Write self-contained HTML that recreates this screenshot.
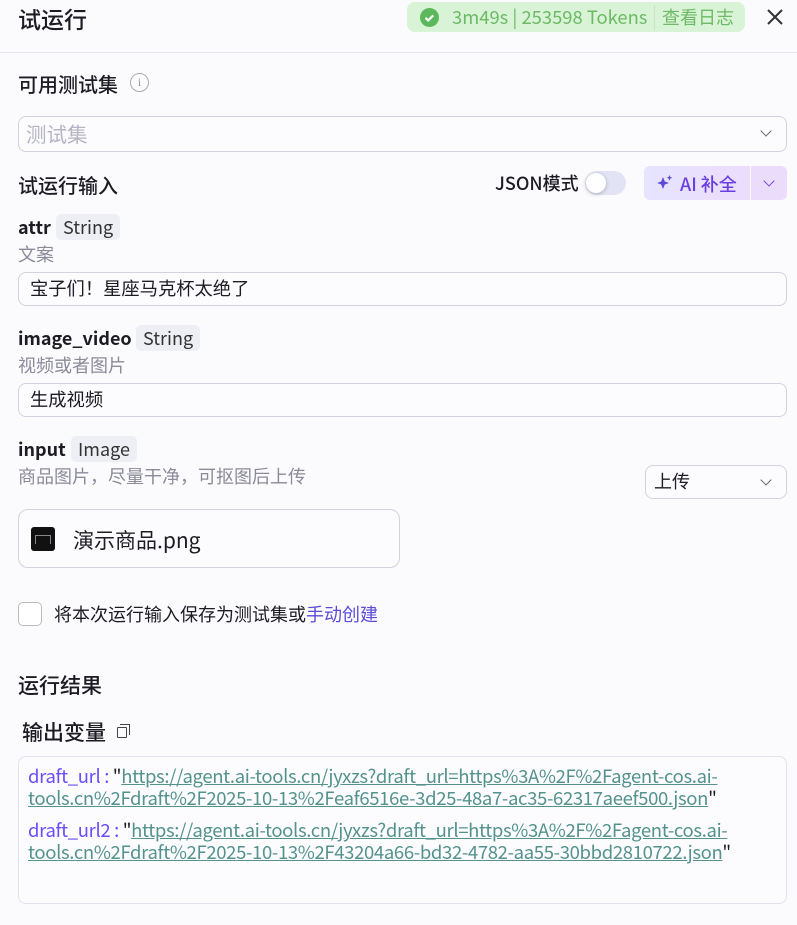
<!DOCTYPE html>
<html><head><meta charset="utf-8"><style>
*{box-sizing:border-box;margin:0;padding:0}
body{width:797px;height:925px;background:#fbfbfe;font-family:"Noto Sans CJK SC","Liberation Sans",sans-serif;color:#1d1c23;position:relative;overflow:hidden}
.a{position:absolute;white-space:nowrap}
.lbl{font-size:20px;font-weight:500;line-height:26px}
.nm{font-size:18px;font-weight:700;line-height:26px}
.grey{color:#8b8b99;font-size:18px;line-height:22px}
.box{position:absolute;border:1px solid #d2d2e0;border-radius:8px;background:#fcfcff}
.tag{position:absolute;background:#eeeff5;border-radius:5px;font-size:18px;line-height:26px;padding:0 7px;color:#333}
.chev{position:absolute;width:8px;height:8px;border-right:1.5px solid #666;border-bottom:1.5px solid #666;transform:rotate(45deg)}
.res{font-size:18.5px;line-height:22px;letter-spacing:-0.35px}
.k{color:#6b4dff}.u{color:#54928d;text-decoration:underline}
</style></head><body>
<div class="a" style="left:18px;top:3px;font-size:23px;font-weight:500;line-height:30px">试运行</div>
<div class="a" style="left:407px;top:2px;width:338px;height:30px;background:#d9f3d6;border-radius:8px"></div>
<div class="a" style="left:420px;top:8px;width:19px;height:19px;border-radius:50%;background:#5cb85c"></div>
<svg class="a" style="left:420px;top:8px" width="19" height="19"><path d="M5.5 9.8l2.7 2.6 5-5" stroke="#fff" stroke-width="2.2" fill="none"/></svg>
<div class="a" style="left:452px;top:4px;font-size:18.4px;line-height:26px;color:#6dba66">3m49s | 253598 Tokens</div>
<div class="a" style="left:654px;top:5px;width:1px;height:26px;background:#c6e6c2"></div>
<div class="a" style="left:662px;top:4px;font-size:18px;line-height:26px;color:#6dba66">查看日志</div>
<svg class="a" style="left:766px;top:8px" width="18" height="18"><path d="M2 2L16 16M16 2L2 16" stroke="#333" stroke-width="2"/></svg>
<div class="a" style="left:0;top:52px;width:797px;height:1px;background:#e6e6ef"></div>

<div class="a lbl" style="left:18px;top:71px">可用测试集</div>
<div class="a" style="left:130px;top:73px;width:19px;height:19px;border:1.5px solid #aaa;border-radius:50%;font-size:12px;line-height:16px;text-align:center;color:#999;font-family:'Liberation Serif',serif">i</div>
<div class="box" style="left:18px;top:116px;width:769px;height:36px"></div>
<div class="a" style="left:26px;top:120px;font-size:20.5px;line-height:27px;color:#b5b5c2">测试集</div>
<div class="chev" style="left:762px;top:127px"></div>

<div class="a lbl" style="left:18px;top:172px">试运行输入</div>
<div class="a" style="left:495px;top:171px;font-size:18px;line-height:25px;font-weight:500">JSON模式</div>
<div class="a" style="left:585px;top:171px;width:41px;height:24px;border-radius:12px;background:#e2e4f5"></div>
<div class="a" style="left:586px;top:173px;width:20px;height:20px;border-radius:50%;background:#fff;box-shadow:0 1px 4px rgba(0,0,0,.25)"></div>
<div class="a" style="left:644px;top:166px;width:106px;height:34px;border-radius:6px 0 0 6px;background:linear-gradient(90deg,#e6e4ff,#ecdcfb)"></div>
<div class="a" style="left:751px;top:166px;width:36px;height:34px;border-radius:0 6px 6px 0;background:#ecdcfb"></div>
<svg class="a" style="left:656px;top:174px" width="18" height="18"><path d="M7 3l1.8 4.5L13 9l-4.2 1.5L7 15l-1.8-4.5L1 9l4.2-1.5z" fill="#5b4ad8"/><path d="M13.5 1l.8 2 2 .8-2 .8-.8 2-.8-2-2-.8 2-.8z" fill="#5b4ad8"/></svg>
<div class="a" style="left:680px;top:171px;font-size:18px;line-height:26px;font-weight:500;color:#6a3fe0">AI 补全</div>
<div class="chev" style="left:765px;top:177px;border-color:#7b4bd8"></div>

<div class="a nm" style="left:18px;top:214px">attr</div>
<div class="tag" style="left:56px;top:214px">String</div>
<div class="a grey" style="left:18px;top:243px">文案</div>
<div class="box" style="left:18px;top:272px;width:769px;height:34px"></div>
<div class="a" style="left:30px;top:276px;font-size:18.3px;line-height:25px">宝子们！星座马克杯太绝了</div>

<div class="a nm" style="left:18px;top:325px">image_video</div>
<div class="tag" style="left:136px;top:325px">String</div>
<div class="a grey" style="left:18px;top:354px">视频或者图片</div>
<div class="box" style="left:18px;top:383px;width:769px;height:34px"></div>
<div class="a" style="left:30px;top:387px;font-size:18.3px;line-height:25px">生成视频</div>

<div class="a nm" style="left:18px;top:436px">input</div>
<div class="tag" style="left:71px;top:436px">Image</div>
<div class="a grey" style="left:18px;top:465px">商品图片，尽量干净，可抠图后上传</div>
<div class="box" style="left:645px;top:465px;width:142px;height:34px"></div>
<div class="a" style="left:654px;top:469px;font-size:18px;line-height:25px">上传</div>
<div class="chev" style="left:762px;top:476px"></div>

<div class="box" style="left:18px;top:509px;width:382px;height:59px;border-radius:10px"></div>
<div class="a" style="left:31px;top:527px;width:24px;height:24px;border-radius:3px;background:#111"></div>
<div class="a" style="left:35px;top:535px;width:16px;height:9px;border:1.5px solid #888;border-bottom:none"></div>
<div class="a" style="left:73px;top:526px;font-size:21px;line-height:28px">演示商品.png</div>

<div class="a" style="left:18px;top:602px;width:24px;height:24px;border:1.5px solid #bbb;border-radius:5px;background:#fff"></div>
<div class="a" style="left:54px;top:602px;font-size:18px;line-height:25px">将本次运行输入保存为测试集或<span style="color:#5b4ad8">手动创建</span></div>

<div class="a lbl" style="left:18px;top:672px;font-size:21px">运行结果</div>
<div class="a lbl" style="left:22px;top:719px;font-size:21px">输出变量</div>
<div class="a" style="left:117px;top:727px;width:10px;height:11px;border:1.5px solid #444;border-radius:1px"></div>
<div class="a" style="left:120px;top:724px;width:10px;height:11px;border-top:1.5px solid #444;border-right:1.5px solid #444"></div>

<div class="box" style="left:18px;top:756px;width:769px;height:148px;border-color:#e2e2ec;border-radius:8px"></div>
<div class="a res" style="left:28px;top:765px"><span class="k">draft_url :</span> "<span class="u">https://agent.ai-tools.cn/jyxzs?draft_url=https%3A%2F%2Fagent-cos.ai-</span></div>
<div class="a res" style="left:28px;top:787px"><span class="u">tools.cn%2Fdraft%2F2025-10-13%2Feaf6516e-3d25-48a7-ac35-62317aeef500.json</span>"</div>
<div class="a res" style="left:28px;top:819px"><span class="k">draft_url2 :</span> "<span class="u">https://agent.ai-tools.cn/jyxzs?draft_url=https%3A%2F%2Fagent-cos.ai-</span></div>
<div class="a res" style="left:28px;top:841px"><span class="u">tools.cn%2Fdraft%2F2025-10-13%2F43204a66-bd32-4782-aa55-30bbd2810722.json</span>"</div>
</body></html>
